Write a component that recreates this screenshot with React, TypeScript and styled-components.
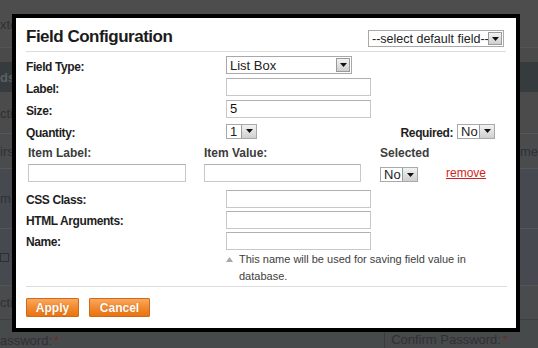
import React from "react";
import styled, { createGlobalStyle } from "styled-components";

const Global = createGlobalStyle`
  html, body { margin: 0; padding: 0; }
  body {
    width: 538px; height: 348px; overflow: hidden; background: #4b4b4b;
    font-family: "Liberation Sans", Arial, sans-serif;
  }
  #root { position: relative; width: 538px; height: 348px; overflow: hidden; }
`;

/* ---------- dimmed page behind the dialog ---------- */
const Backdrop = styled.div`
  display: flex; flex-direction: column; width: 538px; height: 348px; overflow: hidden;
`;
const BgRow = styled.div<{ $h: number; $bg: string; $line?: string; $end?: boolean }>`
  display: flex; justify-content: space-between; align-items: ${(p) => (p.$end ? "flex-end" : "center")};
  box-sizing: border-box; height: ${(p) => p.$h}px; flex: none;
  background: ${(p) => p.$bg};
  border-top: 1px solid ${(p) => p.$line ?? p.$bg};
  font-size: 13px; color: #2f3133; white-space: nowrap;
`;
const BgText = styled.span<{ $bold?: boolean; $color?: string }>`
  font-weight: ${(p) => (p.$bold ? 700 : 400)};
  color: ${(p) => p.$color ?? "#2f3133"};
  display: inline-flex; align-items: center; gap: 2px;
`;
const BgCheck = styled.span`
  width: 9px; height: 9px; border: 1px solid #2e3033; display: inline-block; box-sizing: border-box;
`;
const BgStar = styled.span`color: #6e2a2a;`;
const BgSplit = styled.div`
  display: flex; align-items: center; gap: 6px; padding-right: 30px;
`;
const BgDivider = styled.span`
  width: 1px; height: 17px; background: #3a3d3f; display: inline-block;
`;

/* ---------- dialog ---------- */
const Dialog = styled.div`
  position: absolute; left: 12px; top: 14px;
  width: 500px; border: 4px solid #000; background: #fff;
  display: flex; flex-direction: column;
  color: #1e1e1e; font-size: 12px;
`;
const Header = styled.div`
  display: flex; justify-content: space-between; align-items: flex-end;
  margin: 0 10px; padding: 8px 2px 4px 0; border-bottom: 1px solid #dcdcdc;
`;
const Title = styled.h1`
  margin: 0; font-size: 17px; letter-spacing: -0.5px; line-height: 21px; font-weight: 700; color: #1b1b1b;
`;
const Body = styled.div`
  display: flex; flex-direction: column; padding: 2px 10px 0;
`;
const Row = styled.div<{ $h?: number }>`
  display: flex; align-items: center; height: ${(p) => p.$h ?? 22}px;
`;
const Label = styled.span<{ $auto?: boolean }>`
  width: ${(p) => (p.$auto ? "auto" : "200px")}; flex: none; font-weight: 700; padding-top: 3px;
  color: #1e1e1e; letter-spacing: -0.4px;
`;
const Spacer = styled.span`flex: 1;`;
const RightGroup = styled.span`
  display: flex; align-items: center; gap: 4px; padding-right: 11px;
`;
const Input = styled.div<{ $w: number }>`
  box-sizing: border-box; width: ${(p) => p.$w}px; height: 18px;
  border: 1px solid #c8c8c8; border-top-color: #b0b0b0; background: #fff;
  padding-left: 3px; font-size: 13px; line-height: 16px; color: #111;
`;
const SelectBox = styled.div<{ $w: number; $h: number }>`
  box-sizing: border-box; width: ${(p) => p.$w}px; height: ${(p) => p.$h}px;
  display: flex; align-items: stretch; border: 1px solid #a9a9a9; background: #fff;
  font-size: 12px; color: #222;
`;
const SelectText = styled.span<{ $size?: number }>`
  flex: 1; display: flex; align-items: center; padding-left: 3px;
  font-size: ${(p) => p.$size ?? 12}px; white-space: nowrap; overflow: hidden;
`;
const ArrowBtn = styled.span<{ $inset?: boolean }>`
  width: ${(p) => (p.$inset ? 14 : 15)}px; flex: none;
  margin: ${(p) => (p.$inset ? "1px 1px 1px 0" : "0")};
  box-sizing: border-box; border: 1px solid #9a9a9a;
  ${(p) => (p.$inset ? "" : "border-top: 0; border-bottom: 0; border-right: 0;")}
  background: linear-gradient(#f2f2f2, #cfcfcf);
  display: flex; align-items: center; justify-content: center;
`;
const ItemHead = styled.div`
  display: grid; grid-template-columns: 176px 176px 66px auto; align-items: center;
  height: 21px; padding-left: 2px;
`;
const ItemHeadText = styled.span`font-weight: 700; color: #3c3c3c;`;
const ItemRow = styled.div`
  display: grid; grid-template-columns: 176px 176px 66px auto; align-items: center;
  height: 20px; padding-left: 2px; margin-bottom: 5px;
`;
const SelectCell = styled.div`align-self: end; padding-bottom: 1px;`;
const RemoveLink = styled.a`
  color: #d21f1f; text-decoration: underline; font-size: 12px; cursor: pointer;
`;
const Note = styled.div`
  display: flex; margin-left: 200px; width: 250px; font-size: 11px; line-height: 17px; color: #3e3e3e;
`;
const NoteIcon = styled.span`width: 13px; flex: none; display: flex; align-items: flex-start; padding-top: 6px;`;
const Footer = styled.div`
  display: flex; gap: 10px; margin: 1px 9px 0 10px; padding: 11px 0 11px;
  border-top: 1px solid #dcdcdc;
`;
const Button = styled.button<{ $w: number }>`
  box-sizing: border-box; width: ${(p) => p.$w}px; height: 19px; padding: 0;
  border: 1px solid #cf6a1d; border-radius: 1px;
  background: linear-gradient(#fca85e, #f08a30 50%, #ea730f);
  color: #fff; font-family: "Liberation Sans", Arial, sans-serif; font-weight: 700; font-size: 12px;
  text-shadow: 0 0 1px rgba(150, 60, 0, 0.5);
`;

const Tri = () => (
  <svg width="7" height="4" viewBox="0 0 7 4">
    <polygon points="0,0 7,0 3.5,4" fill="#111" />
  </svg>
);

const Select = ({ w, h, text, inset, size }: { w: number; h: number; text: string; inset?: boolean; size?: number }) => (
  <SelectBox $w={w} $h={h}>
    <SelectText $size={size}>{text}</SelectText>
    <ArrowBtn $inset={inset}>
      <Tri />
    </ArrowBtn>
  </SelectBox>
);

export default function App() {
  return (
    <>
      <Global />
      <Backdrop>
        <BgRow $h={47} $bg="#4d4d4d"><BgText>xte</BgText><BgText /></BgRow>
        <BgRow $h={15} $bg="#4a4a4a" $line="#555" />
        <BgRow $h={30} $bg="#363b3e"><BgText $bold $color="#5a6165">ds</BgText><BgText /></BgRow>
        <BgRow $h={41} $bg="#4b4b4b"><BgText>cti</BgText><BgText /></BgRow>
        <BgRow $h={35} $bg="#4a4b4c" $line="#565758"><BgText>irs</BgText><BgText>ame</BgText></BgRow>
        <BgRow $h={60} $bg="#464a50" $line="#545659"><BgText>m</BgText><BgText /></BgRow>
        <BgRow $h={57} $bg="#464a50" $line="#52555a"><BgText><BgCheck />S</BgText><BgText /></BgRow>
        <BgRow $h={34} $bg="#4a4b4c" $line="#525456"><BgText>cti</BgText><BgText /></BgRow>
        <BgRow $h={29} $bg="#474a4b" $line="#3e4143" $end>
          <BgText>assword:<BgStar>*</BgStar></BgText>
          <BgSplit><BgDivider /><BgText>Confirm Password:<BgStar>*</BgStar></BgText></BgSplit>
        </BgRow>
      </Backdrop>

      <Dialog>
        <Header>
          <Title>Field Configuration</Title>
          <Select w={136} h={17} text="--select default field--" inset size={12.5} />
        </Header>
        <Body>
          <Row>
            <Label>Field Type:</Label>
            <Select w={126} h={18} text="List Box" inset size={13} />
          </Row>
          <Row>
            <Label>Label:</Label>
            <Input $w={145} />
          </Row>
          <Row>
            <Label>Size:</Label>
            <Input $w={145}>5</Input>
          </Row>
          <Row>
            <Label>Quantity:</Label>
            <Select w={31} h={15} text="1" size={13} />
            <Spacer />
            <RightGroup>
              <Label $auto>Required:</Label>
              <Select w={38} h={15} text="No" size={13} />
            </RightGroup>
          </Row>
          <ItemHead>
            <ItemHeadText>Item Label:</ItemHeadText>
            <ItemHeadText>Item Value:</ItemHeadText>
            <ItemHeadText>Selected</ItemHeadText>
            <span />
          </ItemHead>
          <ItemRow>
            <Input $w={158} />
            <Input $w={157} />
            <SelectCell>
              <Select w={38} h={15} text="No" size={13} />
            </SelectCell>
            <RemoveLink>remove</RemoveLink>
          </ItemRow>
          <Row $h={21}>
            <Label>CSS Class:</Label>
            <Input $w={145} />
          </Row>
          <Row $h={21}>
            <Label>HTML Arguments:</Label>
            <Input $w={145} />
          </Row>
          <Row $h={21}>
            <Label>Name:</Label>
            <Input $w={145} />
          </Row>
          <Note>
            <NoteIcon>
              <svg width="7" height="5" viewBox="0 0 7 5">
                <polygon points="3.5,0 7,5 0,5" fill="#a8a8a8" />
              </svg>
            </NoteIcon>
            <span>This name will be used for saving field value in database.</span>
          </Note>
        </Body>
        <Footer>
          <Button $w={53}>Apply</Button>
          <Button $w={61}>Cancel</Button>
        </Footer>
      </Dialog>
    </>
  );
}
